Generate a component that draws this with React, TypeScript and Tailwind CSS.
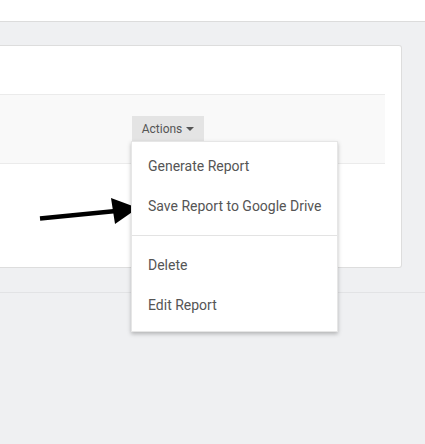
import React from 'react';

const menuItems = ['Generate Report', 'Save Report to Google Drive'];
const menuItems2 = ['Delete', 'Edit Report'];

const App: React.FC = () => {
  return (
    <div className="relative w-[425px] h-[444px] overflow-hidden bg-[#eff0f2] font-['Roboto',sans-serif]">
      {/* Top bar */}
      <div className="h-[22px] bg-white border-b border-[#dcdcdc]" />

      {/* Card */}
      <div className="pt-[23px] pr-[23px]">
        <div className="h-[223px] bg-white border border-l-0 border-[#dddddd] rounded-r-[3px] pt-[48px] pr-[16px]">
          <div className="relative h-[70px] bg-[#f9f9f9] border-y border-[#ebebeb] flex items-center pl-[132px]">
            <div className="relative">
              <button className="h-[26px] w-[72px] bg-[#e4e4e4] text-[12px] text-[#555] flex items-center justify-center gap-[4px]">
                <span>Actions</span>
                <svg width="8" height="5" viewBox="0 0 8 5">
                  <path d="M0 0 L8 0 L4 4 Z" fill="#555" />
                </svg>
              </button>

              {/* Dropdown */}
              <div className="absolute left-[-1px] top-[25px] z-10 w-[207px] bg-white shadow-[0_2px_4px_rgba(0,0,0,0.25)] border border-[#e6e6e6] pt-[4px] pb-[6px]">
                {menuItems.map(item => (
                  <div key={item} className="h-[40px] flex items-center pl-[16px] text-[14px] text-[#555]">
                    {item}
                  </div>
                ))}
                <div className="my-[9px] h-px bg-[#e3e3e3]" />
                {menuItems2.map(item => (
                  <div key={item} className="h-[40px] flex items-center pl-[16px] text-[14px] text-[#555]">
                    {item}
                  </div>
                ))}
              </div>
            </div>
          </div>
        </div>
      </div>

      {/* Lower divider */}
      <div className="mt-[24px] h-px bg-[#e2e3e5]" />

      {/* Annotation arrow */}
      <svg className="absolute left-0 top-0 pointer-events-none" width="425" height="444" viewBox="0 0 425 444">
        <line x1="40" y1="218.5" x2="116" y2="211" stroke="#000" strokeWidth="4.5" />
        <polygon points="111,198 138,208 115,224" fill="#000" />
      </svg>
    </div>
  );
};

export default App;
